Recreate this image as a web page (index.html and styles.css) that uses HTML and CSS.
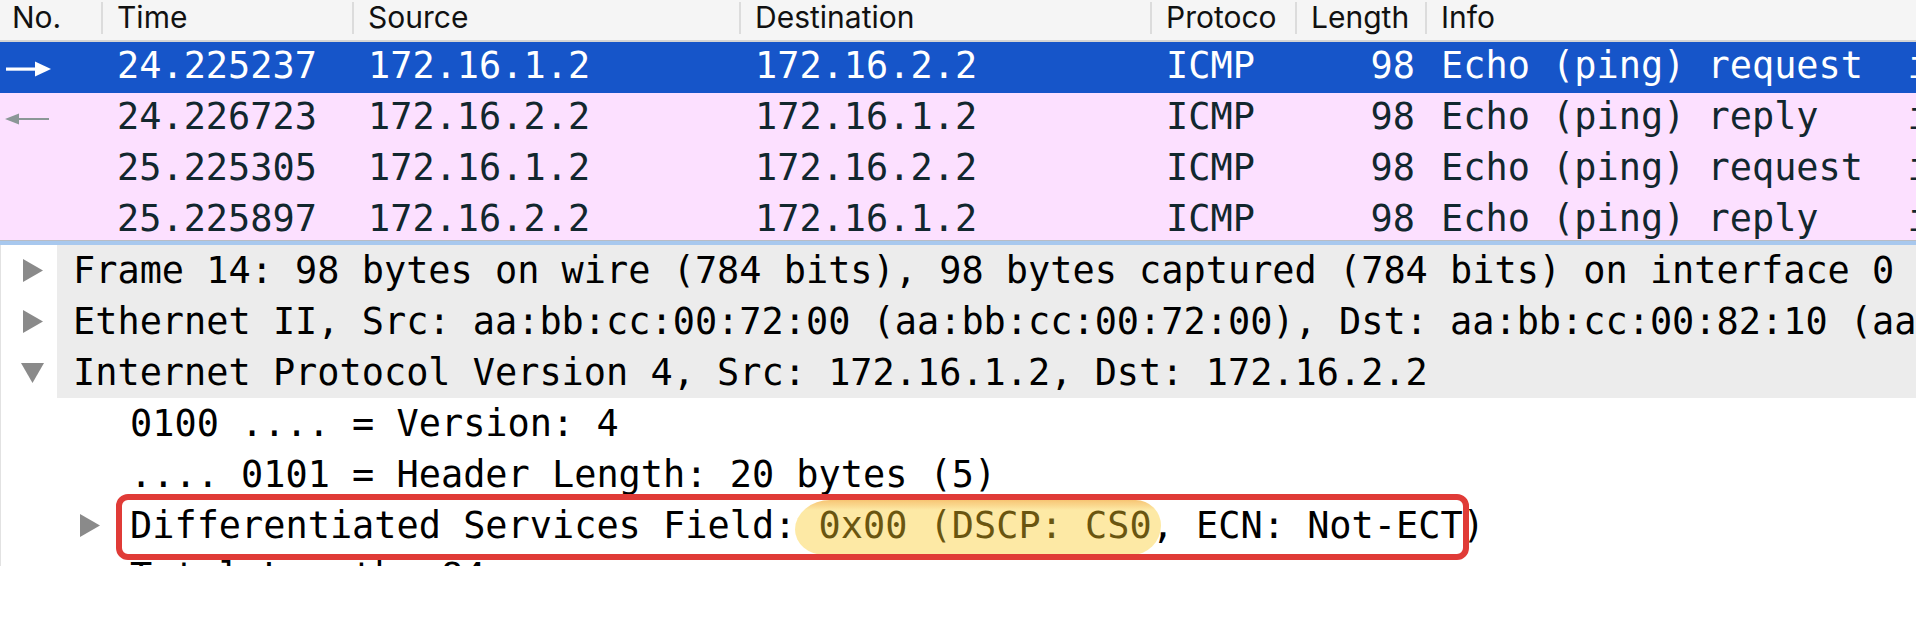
FILE: index.html
```html
<!DOCTYPE html>
<html>
<head>
<meta charset="utf-8">
<link rel="stylesheet" href="styles.css">
</head>
<body>
<div class="app">
  <div class="plist">
    <div class="phead">
      <div class="hc first">No.</div>
      <div class="hc">Time</div>
      <div class="hc">Source</div>
      <div class="hc">Destination</div>
      <div class="hc">Protoco</div>
      <div class="hc">Length</div>
      <div class="hc">Info</div>
    </div>
    <div class="prows">
      <div class="prow sel">
        <div class="pc num"><svg class="arrow-r" width="46" height="16" viewBox="0 0 46 16"><rect x="0" y="6.5" width="32" height="3.2" fill="#fff"/><polygon points="29,0.5 45,8 29,15.5" fill="#fff"/></svg></div>
        <div class="pc">24.225237</div>
        <div class="pc">172.16.1.2</div>
        <div class="pc">172.16.2.2</div>
        <div class="pc">ICMP</div>
        <div class="pc len">98</div>
        <div class="pc">Echo (ping) request  id=0x0b27, seq=1/256, ttl=64 (reply in 15)</div>
      </div>
      <div class="prow">
        <div class="pc num"><svg class="arrow-l" width="46" height="14" viewBox="0 0 46 14"><rect x="12" y="6" width="33" height="2" fill="#8b9797"/><polygon points="1,7 15,1.5 15,12.5" fill="#8b9797"/></svg></div>
        <div class="pc">24.226723</div>
        <div class="pc">172.16.2.2</div>
        <div class="pc">172.16.1.2</div>
        <div class="pc">ICMP</div>
        <div class="pc len">98</div>
        <div class="pc">Echo (ping) reply    id=0x0b27, seq=1/256, ttl=63 (request in 14)</div>
      </div>
      <div class="prow">
        <div class="pc num"></div>
        <div class="pc">25.225305</div>
        <div class="pc">172.16.1.2</div>
        <div class="pc">172.16.2.2</div>
        <div class="pc">ICMP</div>
        <div class="pc len">98</div>
        <div class="pc">Echo (ping) request  id=0x0b27, seq=2/512, ttl=64 (reply in 17)</div>
      </div>
      <div class="prow">
        <div class="pc num"></div>
        <div class="pc">25.225897</div>
        <div class="pc">172.16.2.2</div>
        <div class="pc">172.16.1.2</div>
        <div class="pc">ICMP</div>
        <div class="pc len">98</div>
        <div class="pc">Echo (ping) reply    id=0x0b27, seq=2/512, ttl=63 (request in 16)</div>
      </div>
    </div>
  </div>
  <div class="splitter"></div>
  <div class="tree">
    <div class="trow top">
      <div class="tw"><svg class="tri-r" width="20" height="23" viewBox="0 0 20 23"><polygon points="0,0 20,11.5 0,23" fill="#8a8a8a"/></svg></div>
      <div class="tt">Frame 14: 98 bytes on wire (784 bits), 98 bytes captured (784 bits) on interface 0</div>
    </div>
    <div class="trow top">
      <div class="tw"><svg class="tri-r" width="20" height="23" viewBox="0 0 20 23"><polygon points="0,0 20,11.5 0,23" fill="#8a8a8a"/></svg></div>
      <div class="tt">Ethernet II, Src: aa:bb:cc:00:72:00 (aa:bb:cc:00:72:00), Dst: aa:bb:cc:00:82:10 (aa:bb:cc:00:82:10)</div>
    </div>
    <div class="trow top">
      <div class="tw"><svg class="tri-d" width="23" height="20" viewBox="0 0 23 20"><polygon points="0,0 23,0 11.5,20" fill="#8a8a8a"/></svg></div>
      <div class="tt">Internet Protocol Version 4, Src: 172.16.1.2, Dst: 172.16.2.2</div>
    </div>
    <div class="trow l1">
      <div class="tw"></div>
      <div class="tt">0100 .... = Version: 4</div>
    </div>
    <div class="trow l1">
      <div class="tw"></div>
      <div class="tt">.... 0101 = Header Length: 20 bytes (5)</div>
    </div>
    <div class="trow l1">
      <div class="tw"><svg class="tri-r" width="20" height="23" viewBox="0 0 20 23"><polygon points="0,0 20,11.5 0,23" fill="#8a8a8a"/></svg></div>
      <div class="tt marked">Differentiated Services Field: 0x00 (DSCP: CS0, ECN: Not-ECT)<span class="hilite"></span><span class="redbox"></span></div>
    </div>
    <div class="trow l1">
      <div class="tw"></div>
      <div class="tt">Total Length: 84</div>
    </div>
  </div>
</div>
</body>
</html>
```

FILE: styles.css
```css
html, body {
  margin: 0;
  padding: 0;
  background: #ffffff;
}

body {
  width: 1916px;
  height: 640px;
  overflow: hidden;
}

.app {
  display: flex;
  flex-direction: column;
  width: 1916px;
}

/* ---------- packet list ---------- */
.phead,
.prow {
  display: grid;
  grid-template-columns: 101px 251px 387px 411px 145px 130px 1fr;
}

.phead {
  height: 40px;
  background: #f5f5f5;
  border-bottom: 2px solid #d4d4d4;
  font-family: Inter, "Liberation Sans", sans-serif;
  font-size: 30px;
  color: #111111;
}

.hc {
  padding-left: 16px;
  line-height: 34px;
  white-space: nowrap;
  overflow: hidden;
  background: linear-gradient(#dcdcdc, #dcdcdc) 0 2px / 2px 32px no-repeat;
}

.hc.first {
  padding-left: 12px;
  background: none;
}

.prows {
  height: 198px;
  overflow: hidden;
  background: #fce0ff;
}

.prow {
  height: 51px;
  background: #fce0ff;
  color: #12272e;
  font-family: "DejaVu Sans Mono", monospace;
  font-size: 36.9px;
  line-height: 47px;
}

.prow.sel {
  height: 50.5px;
  background: #1655c9;
  color: #ffffff;
}

.pc {
  padding-left: 16px;
  white-space: pre;
  overflow: hidden;
}

.pc.num {
  padding-left: 4px;
  display: flex;
  align-items: center;
}

.arrow-r {
  margin-top: 4px;
  margin-left: 2px;
}

.arrow-l {
  margin-top: 2px;
}

.pc.len {
  text-align: right;
  padding-left: 0;
  padding-right: 10px;
}

.splitter {
  height: 4px;
  border-top: 1px solid #b9bcc4;
  background: #a8c8ee;
}

/* ---------- packet details tree ---------- */
.tree {
  height: 321px;
  overflow: hidden;
  border-left: 1px solid #e2e2e2;
  font-family: "DejaVu Sans Mono", monospace;
  font-size: 36.9px;
  color: #000000;
}

.trow {
  display: flex;
  height: 51px;
}

.trow.l1 {
  padding-left: 57px;
}

.tw {
  width: 56px;
  flex: none;
  display: flex;
  align-items: center;
}

.tri-r {
  margin-left: 22px;
}

.tri-d {
  margin-left: 20px;
}

.tt {
  flex: 1;
  padding-left: 16px;
  line-height: 51px;
  white-space: pre;
}

.trow.top .tt {
  background: #ececec;
}

.tt.marked {
  position: relative;
  flex: none;
}

.hilite {
  position: absolute;
  left: 681px;
  top: 0;
  width: 366px;
  height: 55px;
  border-radius: 36px 26px 30px 30px / 30px 26px 30px 26px;
  background:
    linear-gradient(rgba(236, 140, 40, 0.4), rgba(236, 140, 40, 0) 10px),
    rgba(250, 203, 41, 0.42);
}

.redbox {
  position: absolute;
  left: 2px;
  top: -6px;
  width: 1353px;
  height: 66px;
  box-sizing: border-box;
  border: 6px solid #e03b37;
  border-radius: 12px;
}
```
